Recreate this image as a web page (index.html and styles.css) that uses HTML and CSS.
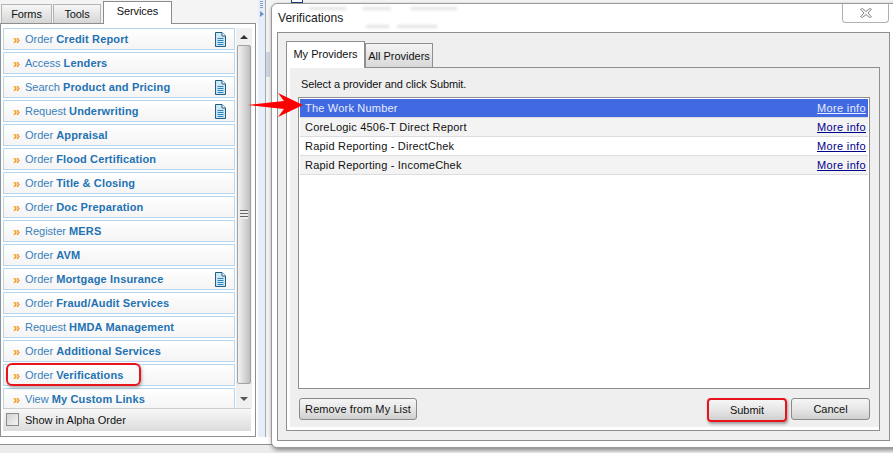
FILE: index.html
```html
<!DOCTYPE html>
<html lang="en">
<head>
<meta charset="utf-8">
<title>Verifications</title>
<link rel="stylesheet" href="styles.css">
</head>
<body>
<div class="app">
  <div class="main">
    <aside class="side">
      <div class="tabs">
        <div class="tab forms">Forms</div>
        <div class="tab tools">Tools</div>
        <div class="tab active">Services</div>
      </div>
      <div class="panel">
        <div class="listwrap">
          <ul class="menu">
            <li class="row"><span class="chev">»</span><span>Order <b>Credit Report</b></span><svg class="doc" viewBox="0 0 11 15"><path d="M.5.5h6.500l3.500 3.500v10.500h-10z" fill="#cfe6f5" stroke="#1f5f80"/><path d="M7 .5v3.500h3.500" fill="#fff" stroke="#1f5f80"/><path d="M2.500 6.500h6M2.500 8.500h6M2.500 10.500h6M2.500 12.500h6" stroke="#2c86bd"/></svg></li>
            <li class="row"><span class="chev">»</span><span>Access <b>Lenders</b></span></li>
            <li class="row"><span class="chev">»</span><span>Search <b>Product and Pricing</b></span><svg class="doc" viewBox="0 0 11 15"><path d="M.5.5h6.500l3.500 3.500v10.500h-10z" fill="#cfe6f5" stroke="#1f5f80"/><path d="M7 .5v3.500h3.500" fill="#fff" stroke="#1f5f80"/><path d="M2.500 6.500h6M2.500 8.500h6M2.500 10.500h6M2.500 12.500h6" stroke="#2c86bd"/></svg></li>
            <li class="row"><span class="chev">»</span><span>Request <b>Underwriting</b></span><svg class="doc" viewBox="0 0 11 15"><path d="M.5.5h6.500l3.500 3.500v10.500h-10z" fill="#cfe6f5" stroke="#1f5f80"/><path d="M7 .5v3.500h3.500" fill="#fff" stroke="#1f5f80"/><path d="M2.500 6.500h6M2.500 8.500h6M2.500 10.500h6M2.500 12.500h6" stroke="#2c86bd"/></svg></li>
            <li class="row"><span class="chev">»</span><span>Order <b>Appraisal</b></span></li>
            <li class="row"><span class="chev">»</span><span>Order <b>Flood Certification</b></span></li>
            <li class="row"><span class="chev">»</span><span>Order <b>Title &amp; Closing</b></span></li>
            <li class="row"><span class="chev">»</span><span>Order <b>Doc Preparation</b></span></li>
            <li class="row"><span class="chev">»</span><span>Register <b>MERS</b></span></li>
            <li class="row"><span class="chev">»</span><span>Order <b>AVM</b></span></li>
            <li class="row"><span class="chev">»</span><span>Order <b>Mortgage Insurance</b></span><svg class="doc" viewBox="0 0 11 15"><path d="M.5.5h6.500l3.500 3.500v10.500h-10z" fill="#cfe6f5" stroke="#1f5f80"/><path d="M7 .5v3.500h3.500" fill="#fff" stroke="#1f5f80"/><path d="M2.500 6.500h6M2.500 8.500h6M2.500 10.500h6M2.500 12.500h6" stroke="#2c86bd"/></svg></li>
            <li class="row"><span class="chev">»</span><span>Order <b>Fraud/Audit Services</b></span></li>
            <li class="row"><span class="chev">»</span><span>Request <b>HMDA Management</b></span></li>
            <li class="row"><span class="chev">»</span><span>Order <b>Additional Services</b></span></li>
            <li class="row"><span class="chev">»</span><span>Order <b>Verifications</b></span></li>
            <li class="row"><span class="chev">»</span><span>View <b>My Custom Links</b></span></li>
          </ul>
          <div class="scroll">
            <div class="sbtn"><i class="up"></i></div>
            <div class="thumb"><i class="grip"></i></div>
            <div class="sbtn low"><i class="down"></i></div>
          </div>
        </div>
        <div class="foot"><span class="check"></span>Show in Alpha Order</div>
      </div>
    </aside>
    <div class="splitter"><span class="dots"></span><i class="tri"></i></div>
    <div class="behind"><i class="block"></i></div>
  </div>
  <div class="status"></div>
</div>

<div class="topbox"></div>

<section class="dialog">
  <header class="title">
    <h1>Verifications</h1>
    <span class="ghost g1"></span><span class="ghost g2"></span><span class="ghost g3"></span>
    <span class="ghost g4"></span><span class="ghost g5"></span>
    <div class="close"><svg class="x" viewBox="0 0 14 12"><path d="M.5 1.500l2-1L7 4l4.500-3.500 2 1L9.500 6l4 4.500-2 1L7 8l-4.500 3.500-2-1L4.500 6z" fill="#f4f4f4" stroke="#777"/></svg></div>
  </header>
  <div class="body">
    <div class="dtabs">
      <div class="dtab on">My Providers</div>
      <div class="dtab">All Providers</div>
    </div>
    <div class="content">
      <p class="hint">Select a provider and click Submit.</p>
      <ul class="providers">
        <li class="prow sel"><span>The Work Number</span><a href="#">More info</a></li>
        <li class="prow alt"><span>CoreLogic 4506-T Direct Report</span><a href="#">More info</a></li>
        <li class="prow"><span>Rapid Reporting - DirectChek</span><a href="#">More info</a></li>
        <li class="prow alt"><span>Rapid Reporting - IncomeChek</span><a href="#">More info</a></li>
      </ul>
      <div class="actions">
        <button class="btn remove">Remove from My List</button>
        <span class="grow"></span>
        <button class="btn submit">Submit</button>
        <button class="btn cancel">Cancel</button>
      </div>
    </div>
  </div>
</section>

<div class="ring"></div>
<svg class="arrow" viewBox="0 0 56 24"><path d="M0 12 L36 8 L30 0 L55 12 L30 24 L36 16z" fill="#f00"/></svg>
</body>
</html>
```
FILE: styles.css
```css
* { box-sizing: border-box; }
html, body { margin: 0; padding: 0; height: 100%; overflow: hidden; background: #fff; }
body { position: relative; font-family: "Liberation Sans", Arial, sans-serif; font-size: 11px; color: #111; }
ul { list-style: none; margin: 0; padding: 0; }
.app { display: flex; flex-direction: column; width: 893px; height: 453px; }
.main { display: flex; height: 437px; flex: none; }

.side { width: 258px; flex: none; display: flex; flex-direction: column; background: #fff; }
.tabs { display: flex; align-items: flex-end; height: 23px; padding-left: 1px; gap: 1px; background: #f4f4f4; flex: none; }
.tab { height: 19px; border: 1px solid #b5b5b5; border-bottom: 0; background: linear-gradient(#f6f6f6, #d6d6d6); text-align: center; line-height: 19px; letter-spacing: -.1px; }
.forms { width: 51px; }
.tools { width: 48px; }
.tab.active { width: 69px; height: 23px; margin-left: 1px; border: 1px solid #8c8c8c; border-bottom: 0; background: #fff; line-height: 18px; position: relative; top: 1px; }
.panel { width: 256px; height: 414px; border: 1px solid #8f8f8f; padding: 4px 3px 5px 2px; display: flex; flex-direction: column; }
.listwrap { display: flex; height: 380px; flex: none; overflow: hidden; gap: 1px; }
.menu { width: 232px; flex: none; display: flex; flex-direction: column; gap: 2px; overflow: hidden; }
.row { flex: none; height: 22px; border: 1px solid #b5d6ee; background: linear-gradient(#fff, #f4f4f4); display: flex; align-items: center; padding: 0 8px 0 9px; color: #3a80ba; font-size: 11px; }
.row b { color: #2472b2; letter-spacing: .15px; }
.chev { color: #f59c15; font-weight: 700; font-size: 13px; width: 12px; flex: none; line-height: 1; }
.doc { width: 11px; height: 15px; margin-left: auto; }
.scroll { width: 16px; flex: none; display: flex; flex-direction: column; background: #f0f0f0; }
.sbtn { height: 17px; display: flex; align-items: center; justify-content: center; flex: none; }
.sbtn.low { height: 24px; padding-top: 6px; }
.up { border: 4px solid transparent; border-top: 0; border-bottom-color: #333; width: 0; height: 0; }
.down { border: 4px solid transparent; border-bottom: 0; border-top-color: #555; width: 0; height: 0; }
.thumb { flex: 1; margin: 0 1px; border: 1px solid #a2a2a2; border-radius: 2px; background: linear-gradient(90deg, #f2f2f2, #d4d4d4 60%, #bdbdbd); display: flex; align-items: center; justify-content: center; }
.grip { width: 8px; height: 9px; background: repeating-linear-gradient(#666 0 1px, #eee 1px 3px); }
.foot { height: 23px; width: 248px; flex: none; background: linear-gradient(#f8f8f8, #dcdcdc); display: flex; align-items: center; padding: 0 0 1px 3px; border-top: 1px solid #ccc; }
.check { width: 13px; height: 13px; border: 1px solid #8a8a8a; background: linear-gradient(135deg, #d2d2d2, #f4f4f4); margin-right: 6px; }
.status { margin-top: 7px; flex: 1; border-top: 1px solid #8f8f8f; background: #ececec; }

.splitter { width: 7px; flex: none; background: #e6eefa; position: relative; padding: 1px 0 0 2px; }
.dots { display: block; width: 3px; height: 8px; background: repeating-linear-gradient(#8aa0bd 0 1px, transparent 1px 2px); }
.tri { position: absolute; left: 2px; top: 11px; border: 3px solid transparent; border-left: 4px solid #6d93c4; border-right: 0; }
.behind { flex: 1; background: #f4f4f4; border-left: 1px solid #a8a8a8; padding-top: 52px; }
.block { display: block; width: 4px; height: 25px; background: #cdd6e2; }
.topbox { position: absolute; left: 291px; top: 0; width: 12px; height: 3px; border: 1px solid #223d80; border-top: 0; background: #fff; }

.dialog { position: absolute; left: 271px; top: 3px; width: 640px; height: 445px; background: #fff; border: 1px solid #9a9a9a; border-radius: 6px; box-shadow: 1px 2px 4px rgba(0,0,0,.45); padding: 0 20px 6px 5px; display: flex; flex-direction: column; }
.title { height: 28px; display: flex; align-items: center; flex: none; }
.title h1 { margin: 0 0 0 1px; font-size: 12.100px; font-weight: 400; color: #222; position: relative; z-index: 1; }
.ghost { position: absolute; height: 3px; background: #e2e2e2; filter: blur(1.500px); }
.g1 { left: 37px; top: 3px; width: 37px; }
.g2 { left: 91px; top: 3px; width: 28px; }
.g3 { left: 139px; top: 3px; width: 46px; }
.g4 { left: 94px; top: 21px; width: 23px; }
.g5 { left: 125px; top: 21px; width: 40px; }
.close { position: absolute; left: 570px; top: 0; width: 47px; height: 19px; border: 1px solid #b0b0b0; border-top: 0; border-radius: 0 0 4px 4px; background: #fff; display: flex; align-items: center; justify-content: center; }
.x { width: 12px; height: 10px; }
.body { flex: 1; border: 1px solid #8f8f8f; background: #efefef; padding: 8px 9px 9px 8px; display: flex; flex-direction: column; }
.dtabs { display: flex; align-items: flex-end; height: 26px; flex: none; }
.dtab { height: 24px; width: 68px; border: 1px solid #8f8f8f; border-bottom: 0; background: linear-gradient(#f4f4f4, #d8d8d8); text-align: center; line-height: 24px; }
.dtab.on { height: 27px; width: 79px; background: #fff; line-height: 24px; position: relative; top: 1px; z-index: 1; }
.content { flex: 1; border: 1px solid #8f8f8f; background: #efefef; box-shadow: inset 3px -3px 0 #fff; padding: 9px 9px 0 11px; display: flex; flex-direction: column; }
.hint { margin: 0 0 6px 3px; height: 14px; line-height: 14px; letter-spacing: -.1px; }
.providers { height: 292px; border: 1px solid #8f8f8f; background: #fff; padding: 1px; flex: none; }
.prow { height: 19px; display: flex; justify-content: space-between; align-items: center; padding: 0 2px 0 5px; border-bottom: 1px solid #ddd; background: #fff; letter-spacing: .2px; }
.prow.alt { background: #f3f3f3; }
.prow.sel { background: #4169e1; color: #e6ecff; }
.prow a { color: #00008b; letter-spacing: .35px; }
.prow.sel a { color: #e6ecff; }
.actions { display: flex; align-items: flex-start; margin-top: 9px; }
.grow { flex: 1; }
.btn { height: 22px; font: 11px "Liberation Sans", Arial, sans-serif; color: #111; border: 1px solid #8a8a8a; border-radius: 3px; background: linear-gradient(#f5f5f5, #e8e8e8 45%, #d0d0d0); padding: 0; }
.remove { width: 118px; margin-left: 1px; letter-spacing: .1px; }
.submit { width: 80px; height: 24px; margin-right: 4px; border: 2px solid #e8141c; border-radius: 4px; box-shadow: 1px 2px 3px rgba(0,0,0,.35); }
.cancel { width: 79px; }

.ring { position: absolute; left: 6px; top: 363px; width: 135px; height: 23px; border: 2px solid #e8141c; border-radius: 6px; box-shadow: 1px 2px 3px rgba(0,0,0,.3); }
.arrow { position: absolute; left: 248px; top: 93px; width: 56px; height: 24px; }
```
